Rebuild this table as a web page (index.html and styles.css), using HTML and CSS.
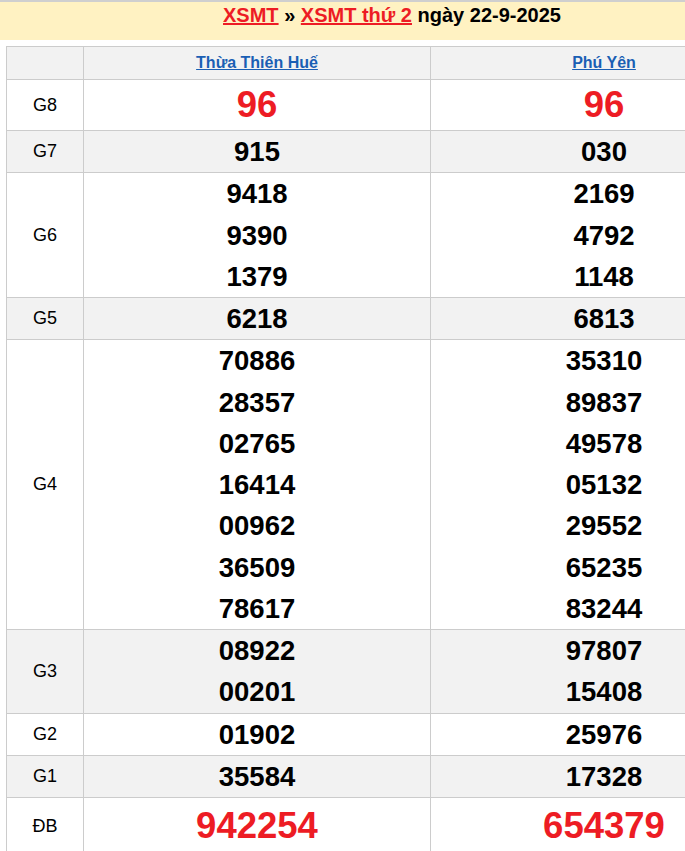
FILE: index.html
```html
<!DOCTYPE html>
<html lang="vi">
<head>
<meta charset="utf-8">
<title>XSMT thứ 2 ngày 22-9-2025</title>
<link rel="stylesheet" href="styles.css">
</head>
<body>
<div class="clip">
<div class="page">
  <div class="title-bar">
    <a class="red-link" href="#">XSMT</a> » <a class="red-link" href="#">XSMT thứ 2</a> ngày 22-9-2025
  </div>
  <table class="result">
    <colgroup>
      <col class="c-label">
      <col class="c-prov">
      <col class="c-prov">
    </colgroup>
    <thead>
      <tr class="head">
        <th></th>
        <th><a class="prov-link" href="#">Thừa Thiên Huế</a></th>
        <th><a class="prov-link" href="#">Phú Yên</a></th>
      </tr>
    </thead>
    <tbody>
      <tr class="white">
        <td class="lbl">G8</td>
        <td class="big"><div>96</div></td>
        <td class="big"><div>96</div></td>
      </tr>
      <tr class="grey">
        <td class="lbl">G7</td>
        <td class="num"><div>915</div></td>
        <td class="num"><div>030</div></td>
      </tr>
      <tr class="white">
        <td class="lbl">G6</td>
        <td class="num"><div>9418</div><div>9390</div><div>1379</div></td>
        <td class="num"><div>2169</div><div>4792</div><div>1148</div></td>
      </tr>
      <tr class="grey">
        <td class="lbl">G5</td>
        <td class="num"><div>6218</div></td>
        <td class="num"><div>6813</div></td>
      </tr>
      <tr class="white">
        <td class="lbl">G4</td>
        <td class="num"><div>70886</div><div>28357</div><div>02765</div><div>16414</div><div>00962</div><div>36509</div><div>78617</div></td>
        <td class="num"><div>35310</div><div>89837</div><div>49578</div><div>05132</div><div>29552</div><div>65235</div><div>83244</div></td>
      </tr>
      <tr class="grey">
        <td class="lbl">G3</td>
        <td class="num"><div>08922</div><div>00201</div></td>
        <td class="num"><div>97807</div><div>15408</div></td>
      </tr>
      <tr class="white">
        <td class="lbl">G2</td>
        <td class="num"><div>01902</div></td>
        <td class="num"><div>25976</div></td>
      </tr>
      <tr class="grey">
        <td class="lbl">G1</td>
        <td class="num"><div>35584</div></td>
        <td class="num"><div>17328</div></td>
      </tr>
      <tr class="white">
        <td class="lbl">ĐB</td>
        <td class="big db"><div>942254</div></td>
        <td class="big db"><div>654379</div></td>
      </tr>
    </tbody>
  </table>
</div>
</div>
</body>
</html>
```
FILE: styles.css
```css
html, body {
  margin: 0;
  padding: 0;
  background: #ffffff;
}

body {
  font-family: "Liberation Sans", Arial, sans-serif;
  color: #000;
}

.clip {
  width: 100%;
  overflow: hidden;
}

.page {
  width: 784px;
}

.title-bar {
  border-top: 2px solid #cfcfcf;
  background: #fff2c2;
  padding: 1px 0 13px;
  line-height: 24px;
  font-size: 20px;
  font-weight: bold;
  text-align: center;
}

.red-link {
  color: #ed1c24;
  text-decoration: underline;
}

.result {
  border-collapse: collapse;
  margin: 6px 0 0 6px;
  table-layout: fixed;
  width: 772px;
}

.c-label {
  width: 77px;
}

.c-prov {
  width: 347px;
}

.result th,
.result td {
  border: 1px solid #cccccc;
  padding: 0;
  text-align: center;
  vertical-align: middle;
}

.head th {
  background: #f2f2f2;
  height: 32px;
  font-size: 16px;
  font-weight: bold;
}

.prov-link {
  color: #1a5fb4;
  text-decoration: underline;
}

.grey td {
  background: #f2f2f2;
}

.white td {
  background: #ffffff;
}

.lbl {
  font-size: 18px;
  font-weight: normal;
}

.num {
  font-size: 27.5px;
  font-weight: bold;
  line-height: 41.25px;
}

.big {
  font-size: 36.5px;
  font-weight: bold;
  line-height: 50px;
  color: #ed1c24;
}

.big.db {
  line-height: 56px;
}
```
